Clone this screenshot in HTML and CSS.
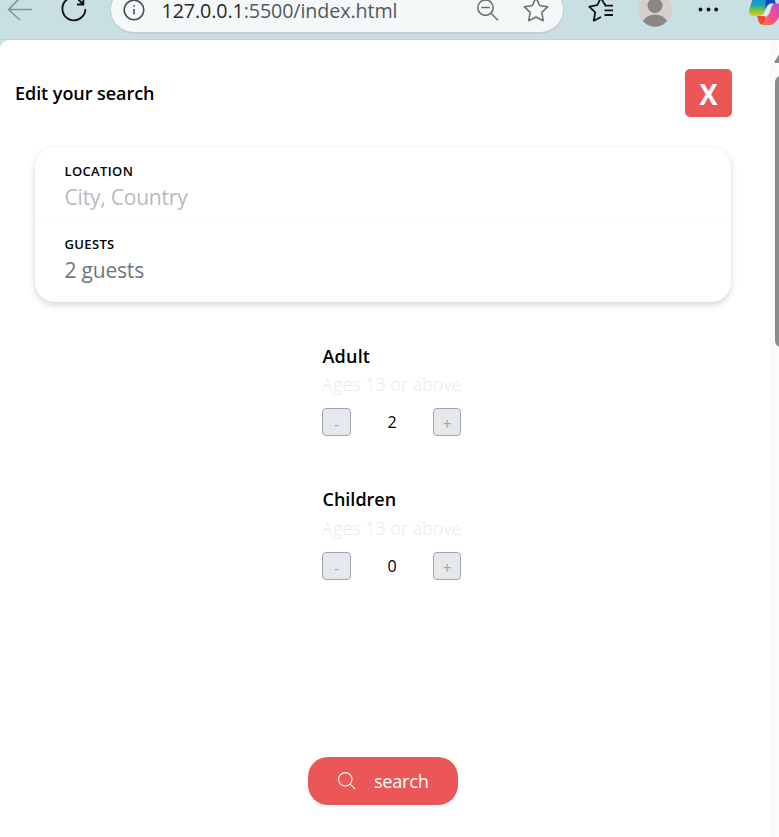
FILE: index.html
```html
<!DOCTYPE html>
<html lang="en">
<head>
<meta charset="utf-8">
<title>Edit your search</title>
<link rel="stylesheet" href="styles.css">
</head>
<body>
<header class="toolbar">
  <svg class="back" width="28" height="40" viewBox="6 0 28 40"><path d="M32 9.5H8.5M20-2L8.5 9.5L20 20" /></svg>
  <svg class="reload" width="28" height="40" viewBox="60 0 28 40"><path d="M85.4 9A11.5 11.5 0 1 1 67-.4M83.3-2V4.5H77M83 4.3L78-1"/></svg>
  <div class="address">
    <svg class="info" width="24" height="34" viewBox="122 0 24 34"><circle cx="134" cy="10" r="9.8"/><path d="M134 9V14.3M134 5.2V6.8"/></svg>
    <span class="url"><span class="host">127.0.0.1</span>:5500/index.html</span>
    <svg class="zoom" width="24" height="34" viewBox="476 0 24 34"><circle cx="485.5" cy="7.7" r="7.7"/><path d="M491 13.2L498 20.2M481.2 7.5H489.8"/></svg>
    <svg class="star" width="26" height="34" viewBox="523 0 26 34"><path d="M536-2.2L539.7 5.5L547.7 6.7L541.8 12.3L543.2 20.7L536 17L528.8 20.7L530.2 12.3L524.3 6.7L532.3 5.5Z"/></svg>
  </div>
  <svg class="fav" width="28" height="40" viewBox="587 0 28 40"><path d="M606 4.5L604.6 4.4L601-2.2L597.2 5.2L589.3 6.7L595.2 12.3L593.8 20.7L601 17M604.5 5.7H613M604.5 10.3H613M604.5 15H613"/></svg>
  <svg class="avatar" width="34" height="40" viewBox="638 0 34 40"><circle class="disc" cx="655" cy="10" r="16.8"/><circle class="person" cx="655" cy="5.5" r="7.5"/><path class="person" d="M643 21Q647 14.5 655 14.5T667 21Q662 26.8 655 26.8T643 21Z"/></svg>
  <svg class="dots" width="22" height="40" viewBox="698 0 22 40"><circle cx="700.5" cy="9.5" r="1.9"/><circle cx="708.5" cy="9.5" r="1.9"/><circle cx="716.2" cy="9.5" r="1.9"/></svg>
  <svg class="copilot" width="31" height="40" viewBox="748 0 31 40">
    <defs>
      <linearGradient id="cool" x1="0" y1="0" x2="0" y2="1"><stop offset="0" stop-color="#1689e8"/><stop offset=".4" stop-color="#16a5b0"/><stop offset=".75" stop-color="#8cc63c"/><stop offset="1" stop-color="#f5c517"/></linearGradient>
      <linearGradient id="warm" x1="1" y1="0" x2="0" y2="1"><stop offset="0" stop-color="#b14be0"/><stop offset=".5" stop-color="#f2508e"/><stop offset="1" stop-color="#ff7a3c"/></linearGradient>
    </defs>
    <path fill="url(#cool)" d="M753-3H771L765 11Q763 16 757 16H753Q748 15 749.5 9Z"/>
    <path fill="#1547c4" d="M766-2H774L776 4H772Q768 4 765 9Z"/>
    <path fill="#f04b37" d="M757 16H765L766 18Q764 25 761 24.5Q759 24 757 16Z"/>
    <path fill="url(#warm)" d="M780 3.500H774Q771 5 770 10L765 20Q764 24 761 25H771Q776 24 780 15Z"/>
    <path fill="#dcebed" d="M774 3.500H770Q767 5 766 9L763 16H766Q768.500 16 769.500 13L771.500 7Q772 5 774 3.500Z"/>
  </svg>
</header>
<div class="viewport">
  <main class="page">
    <div class="heading">
      <h1>Edit your search</h1>
      <button class="close"><span>X</span></button>
    </div>
    <section class="card">
      <div class="field location"><label>LOCATION</label><p class="placeholder">City, Country</p></div>
      <div class="field guests"><label>GUESTS</label><p>2 guests</p></div>
    </section>
    <section class="counters">
      <div class="counter">
        <h2 class="adult">Adult</h2>
        <p class="ages">Ages 13 or above</p>
        <div class="stepper"><button>-</button><span>2</span><button>+</button></div>
      </div>
      <div class="counter">
        <h2>Children</h2>
        <p class="ages later">Ages 13 or above</p>
        <div class="stepper"><button>-</button><span>0</span><button>+</button></div>
      </div>
    </section>
    <button class="search">
      <svg width="18" height="18" viewBox="0 0 18 18"><circle cx="7.3" cy="7.3" r="6.7"/><path d="M12.2 12.2L17.2 17.2"/></svg>
      <span>search</span>
    </button>
  </main>
  <aside class="scrollbar">
    <svg width="9" height="36" viewBox="770 40 9 36"><path d="M774.8 61L780 53V63H775.5Q774 63 774.8 61Z"/></svg>
    <div class="thumb"></div>
  </aside>
</div>
</body>
</html>
```
FILE: styles.css
```css
* { box-sizing: border-box; }
body {
  margin: 0;
  height: 837px;
  overflow: hidden;
  background: #c8dfe3;
  color: #000;
  font-family: "Open Sans", "Noto Sans", sans-serif;
}
h1, h2, p { margin: 0; }
button { font: inherit; padding: 0; border: 0; }
svg { display: block; flex: none; fill: none; }

.toolbar { display: flex; height: 40px; padding-left: 6px; border-bottom: 1px solid #bdd5d9; }
.back { stroke: #849396; stroke-width: 1.5; }
.reload { margin-left: 26px; stroke: #111; stroke-width: 1.9; }
.address {
  display: flex;
  flex: none;
  width: 454px;
  height: 48px;
  margin: -14px 0 0 22px;
  padding: 13px 0 0 11px;
  border: 1px solid #c9cccd;
  border-bottom-width: 2px;
  border-radius: 24px;
  background: #f4f8f9;
}
.info { stroke: #4b4e50; stroke-width: 1.6; }
.url { flex: none; width: 330px; padding-left: 15.5px; font-size: 19.7px; line-height: 22px; letter-spacing: -0.1px; color: #55585b; white-space: nowrap; }
.host { color: #27292b; }
.zoom, .star { stroke: #6f7274; stroke-width: 1.6; }
.star { margin-left: 23px; stroke-linejoin: round; }
.fav { margin-left: 23px; stroke: #111; stroke-width: 1.8; stroke-linejoin: round; }
.avatar { margin-left: 23px; }
.disc { fill: #d3d0cd; }
.person { fill: #8a8683; }
.dots { margin-left: 26px; fill: #111; }
.copilot { margin-left: 28px; }

.viewport { display: flex; height: 797px; background: #fff; border-top-left-radius: 9px; overflow: hidden; }
.page { width: 770px; }
.heading { display: flex; justify-content: space-between; align-items: center; height: 48px; margin: 29px 38px 0 15px; }
h1 { font-size: 18px; font-weight: 600; line-height: 24px; letter-spacing: -0.05px; }
.close { width: 47px; height: 48px; border-radius: 5px; background: #eb5757; color: #fff; font-size: 29px; font-weight: 700; }
.close span { display: block; transform: scaleX(.93); }
.card {
  width: 696px;
  height: 155px;
  margin: 30px 0 0 35px;
  border-radius: 20px;
  box-shadow: 0 3px 7px rgba(0, 0, 0, .16), 0 0 2px rgba(0, 0, 0, .04);
}
.field { padding: 14px 0 0 29.5px; }
.location { height: 77px; border-bottom: 1px solid #fafafa; }
.guests { padding-top: 10px; }
label { display: block; font-size: 13px; font-weight: 600; line-height: 20px; letter-spacing: 0.35px; }
.field p { font-size: 21px; line-height: 32px; letter-spacing: -0.2px; color: #6f7680; }
.field .placeholder { color: #b7bac0; }
.counters { display: grid; gap: 51px; width: 140px; margin: 42px 0 0 322px; }
.counter { height: 92px; }
h2 { padding-left: 0.5px; font-size: 18px; font-weight: 600; line-height: 24px; }
.adult { letter-spacing: 0.2px; }
.ages { font-size: 18px; font-weight: 300; line-height: 24px; margin-top: 4px; color: #e9eaed; white-space: nowrap; }
.ages.later { margin-top: 5px; }
.stepper { display: flex; justify-content: space-between; align-items: center; width: 139px; height: 28px; margin-top: 12px; font-size: 16px; }
.stepper button { width: 29px; height: 28px; padding-top: 3px; border: 1px solid #9fa6b5; border-radius: 4px; background: #e7e8ec; color: #a3a8b3; line-height: 22px; }
.stepper button:last-child { width: 28px; }
.search { display: flex; align-items: center; width: 150px; height: 48px; margin: 178px 0 0 308px; padding-left: 30px; border-radius: 20px; background: #eb5757; color: #fff; font-size: 18.2px; letter-spacing: -0.3px; }
.search svg { stroke: #fff; stroke-width: 1.1; }
.search span { margin-left: 18px; }
.scrollbar { width: 9px; background: #fbfbfb; }
.scrollbar path { fill: #8b8b8b; }
.thumb { width: 16px; height: 271px; margin-left: 5px; border-radius: 6px; background: #8b8b8b; }
```
